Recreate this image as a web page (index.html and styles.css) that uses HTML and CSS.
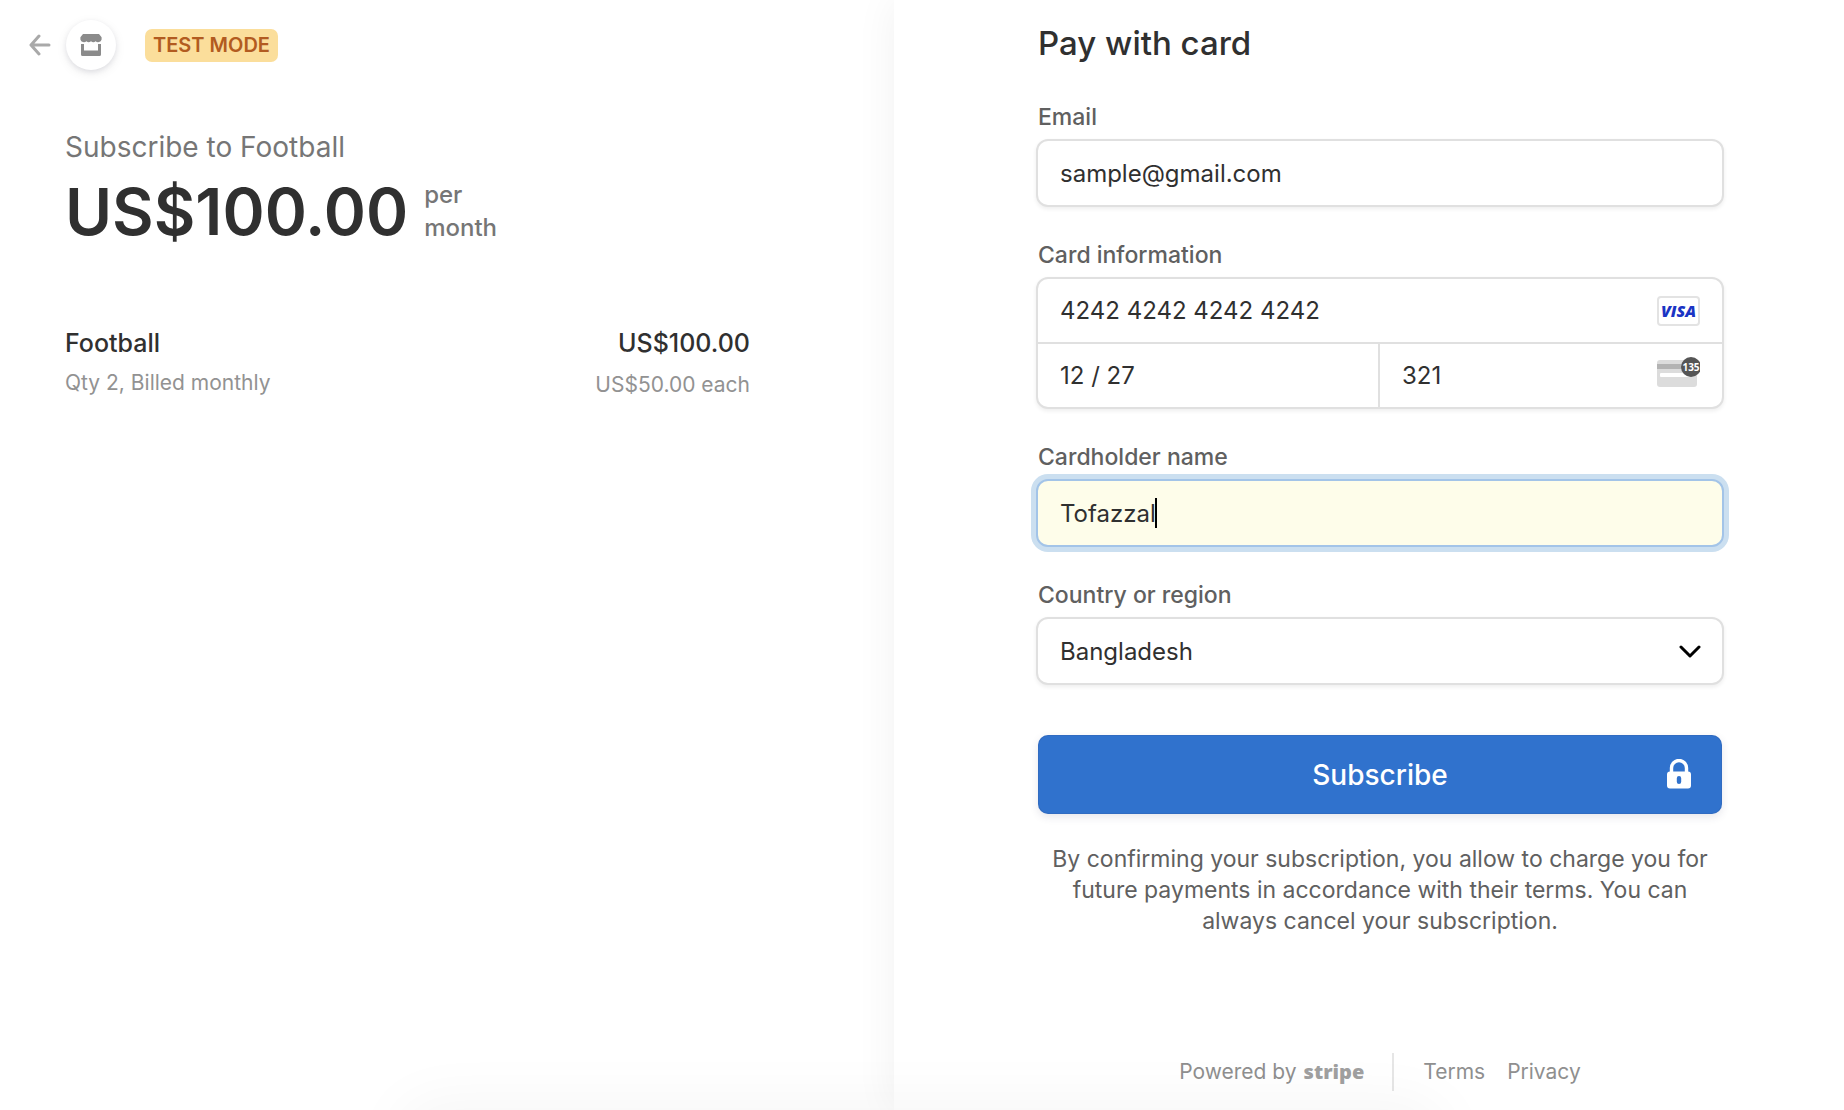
FILE: index.html
```html
<!DOCTYPE html>
<html lang="en">
<head>
<meta charset="utf-8">
<meta name="viewport" content="width=device-width, initial-scale=1">
<title>Checkout</title>
<link rel="stylesheet" href="styles.css">
</head>
<body>
<div class="checkout">
  <section class="summary">
    <header class="header">
      <a class="back" href="#" aria-label="Back">
        <svg width="22" height="22" viewBox="0 0 22 22" fill="none" stroke="#a9a9a9" stroke-width="3" stroke-linecap="round" stroke-linejoin="round"><path d="M20 11H2.5M10 2L2 11l8 9"/></svg>
      </a>
      <span class="shop">
        <svg width="22" height="24" viewBox="0 0 22 24" fill="#8b8b8b"><path d="M3 1h16l2.600 3.200v2.300a3.600 3.600 0 0 1-6 1.700 3.600 3.600 0 0 1-4.600 0 3.600 3.600 0 0 1-4.600 0 3.600 3.600 0 0 1-6-1.700V4.200z"/><path d="M1 11h3v6.500h14V11h3v10.500a1.500 1.500 0 0 1-1.500 1.500h-17A1.500 1.500 0 0 1 1 21.500z"/></svg>
      </span>
      <span class="badge">TEST MODE</span>
    </header>
    <div class="order">
      <h1 class="product">Subscribe to Football</h1>
      <div class="price">
        <span class="amount">US$100.00</span>
        <span class="interval">per month</span>
      </div>
      <div class="item">
        <div class="item-info">
          <span class="item-name">Football</span>
          <span class="item-note">Qty 2, Billed monthly</span>
        </div>
        <div class="item-info item-cost">
          <span class="item-name">US$100.00</span>
          <span class="item-note">US$50.00 each</span>
        </div>
      </div>
    </div>
  </section>

  <main class="payment">
    <form class="form">
      <h2 class="title">Pay with card</h2>

      <div class="field">
        <label class="label" for="email">Email</label>
        <input class="input box" id="email" type="email" value="sample@gmail.com">
      </div>

      <div class="field">
        <label class="label" for="number">Card information</label>
        <div class="card box">
          <div class="cell cell-number">
            <input class="input" id="number" type="text" value="4242 4242 4242 4242">
            <span class="visa">VISA</span>
          </div>
          <div class="cell cell-expiry">
            <input class="input" type="text" value="12 / 27" aria-label="Expiry date">
          </div>
          <div class="cell">
            <input class="input" type="text" value="321" aria-label="CVC">
            <svg class="cvc" width="43" height="30" viewBox="0 0 43 30">
              <rect x="0" y="3" width="40" height="27" rx="3" fill="#dcdcdc"/>
              <rect x="0" y="7" width="40" height="5" fill="#b3b3b3"/>
              <rect x="3" y="16" width="29" height="4" rx="1" fill="#fff"/>
              <circle cx="34" cy="10" r="10" fill="#555"/>
              <text class="cvc-digits" x="34" y="14" text-anchor="middle">135</text>
            </svg>
          </div>
        </div>
      </div>

      <div class="field">
        <label class="label" for="name">Cardholder name</label>
        <div class="control">
          <input class="input box active" id="name" type="text" value="Tofazzal">
          <span class="caret"></span>
        </div>
      </div>

      <div class="field">
        <label class="label" for="country">Country or region</label>
        <div class="control">
          <select class="input box" id="country"><option>Bangladesh</option></select>
          <svg class="chevron" width="22" height="14" viewBox="0 0 22 14" fill="none" stroke="#000" stroke-width="3" stroke-linecap="round" stroke-linejoin="round"><path d="M2 2l9 9 9-9"/></svg>
        </div>
      </div>

      <button class="submit" type="button">Subscribe
        <svg class="lock" width="24" height="30" viewBox="0 0 24 30"><path d="M4.500 14V9a7.500 7.500 0 0 1 15 0v5" fill="none" stroke="#fff" stroke-width="3.400"/><path fill="#fff" fill-rule="evenodd" d="M3 12.500h18a3 3 0 0 1 3 3V26.500a3 3 0 0 1-3 3H3a3 3 0 0 1-3-3V15.500a3 3 0 0 1 3-3zM12 17a2.200 2.200 0 0 0-2.200 2.200v3.600a2.200 2.200 0 0 0 4.400 0v-3.600A2.200 2.200 0 0 0 12 17z"/></svg>
      </button>

      <p class="terms">By confirming your subscription, you allow to charge you for future payments in accordance with their terms. You can always cancel your subscription.</p>
    </form>

    <footer class="footer">
      <a class="powered" href="#">Powered by <span class="stripe">stripe</span></a>
      <nav class="links"><a href="#">Terms</a><a href="#">Privacy</a></nav>
    </footer>
  </main>
</div>
</body>
</html>
```
FILE: styles.css
```css
* {
  box-sizing: border-box;
}

body {
  margin: 0;
  background: #fff;
  color: #303030;
  font-family: Inter, "Liberation Sans", sans-serif;
}

/* faint shade rising from the bottom edge of the window */
body::after {
  content: "";
  position: fixed;
  left: 22%;
  right: 22%;
  bottom: -60px;
  height: 60px;
  border-radius: 60px;
  box-shadow: 0 0 60px 10px rgba(0, 0, 0, 0.04);
  pointer-events: none;
}

a {
  color: inherit;
  text-decoration: none;
}

.checkout {
  display: grid;
  grid-template-columns: 894fr 950fr;
  min-height: 100vh;
  overflow: hidden;
}

.header {
  display: flex;
  align-items: center;
  padding: 20px 29px 0;
}

.back,
.shop {
  display: flex;
  align-items: center;
  justify-content: center;
}

.shop {
  width: 50px;
  height: 50px;
  margin: 0 29px 0 15px;
  border-radius: 50%;
  background: #fff;
  box-shadow: 0 2px 5px rgba(50, 50, 93, 0.1), 0 3px 12px rgba(0, 0, 0, 0.07);
}

.badge {
  padding: 0 8px;
  border-radius: 7px;
  background: #fbde9b;
  color: #b25b20;
  font-size: 20px;
  font-weight: 600;
  line-height: 33px;
}

.order {
  max-width: 750px;
  padding: 60px 0 0 65px;
}

.product {
  margin: 0;
  color: #767676;
  font-size: 28px;
  font-weight: 400;
  line-height: 34px;
}

.price {
  display: flex;
  align-items: center;
  gap: 16px;
  margin-top: 13px;
}

.amount {
  font-size: 64px;
  font-weight: 600;
  line-height: 70px;
}

.interval {
  width: 80px;
  padding-bottom: 2px;
  color: #767676;
  font-size: 24px;
  font-weight: 500;
  line-height: 33px;
}

.item {
  display: flex;
  justify-content: space-between;
  margin-top: 80px;
}

.item-info {
  display: flex;
  flex-direction: column;
  gap: 10px;
}

.item-cost {
  gap: 12px;
  text-align: right;
}

.item-name {
  font-size: 25px;
  font-weight: 500;
  line-height: 32px;
}

.item-note {
  color: #929292;
  font-size: 21px;
  line-height: 28px;
}

.payment {
  display: flex;
  flex-direction: column;
  justify-content: space-between;
  padding: 23px 120px 19px 142px;
  background: #fff;
  box-shadow: 0 0 40px rgba(0, 0, 0, 0.06);
}

.form {
  display: flex;
  flex-direction: column;
  gap: 34px;
}

.title {
  margin: 0 2px 6px;
  font-size: 33px;
  font-weight: 500;
  line-height: 40px;
}

.field {
  display: flex;
  flex-direction: column;
  gap: 8px;
}

.label {
  padding-left: 2px;
  color: #606060;
  font-size: 23px;
  font-weight: 500;
  line-height: 28px;
}

.input {
  display: block;
  width: 100%;
  height: 63px;
  margin: 0;
  padding: 0 22px;
  border: 0;
  outline: 0;
  background: transparent;
  color: #303030;
  font: 400 24px Inter, "Liberation Sans", sans-serif;
  appearance: none;
}

.box {
  border: 2px solid #e0e0e0;
  border-radius: 12px;
  background: #fff;
  box-shadow: 0 2px 4px rgba(0, 0, 0, 0.07);
}

.input.box {
  height: 68px;
}

.active.box {
  border-color: #a3c4e8;
  background: #fefdea;
  box-shadow: 0 0 0 5px #cbdff0;
}

.card {
  display: grid;
  grid-template-columns: 1fr 1fr;
}

.cell {
  display: flex;
  align-items: center;
  padding-right: 22px;
}

.cell-number {
  grid-column: 1 / -1;
  border-bottom: 2px solid #e0e0e0;
}

.cell-expiry {
  border-right: 2px solid #e0e0e0;
}

.visa {
  width: 43px;
  flex: none;
  border: 2px solid #e3e3e3;
  border-radius: 4px;
  color: #1a34c4;
  font: italic 800 16px/26px "Open Sans", sans-serif;
  text-align: center;
}

.cvc {
  flex: none;
  margin-bottom: 8px;
}

.cvc-digits {
  fill: #fff;
  font: 700 10px "Open Sans", sans-serif;
}

.control {
  position: relative;
}

.caret {
  position: absolute;
  top: 19px;
  left: 119px;
  width: 2px;
  height: 30px;
  background: #000;
}

.chevron {
  position: absolute;
  top: 28px;
  right: 23px;
  pointer-events: none;
}

.submit {
  position: relative;
  height: 79px;
  margin: 16px 2px 0;
  border: 0;
  border-radius: 10px;
  background: #3072cd;
  box-shadow: inset 0 0 0 1px rgba(50, 50, 93, 0.1), 0 3px 8px rgba(50, 50, 93, 0.12);
  color: #fff;
  font: 500 28px Inter, "Liberation Sans", sans-serif;
}

.lock {
  position: absolute;
  top: 24px;
  right: 31px;
}

.terms {
  margin: -4px 12px 0;
  color: #606060;
  font-size: 23px;
  line-height: 31px;
  text-align: center;
}

.footer {
  display: flex;
  align-items: center;
  justify-content: center;
  color: #8f8f8f;
  font-size: 21px;
  line-height: 38px;
}

.powered {
  display: flex;
  gap: 7px;
  padding-right: 28px;
  border-right: 2px solid #e6e6e6;
}

.stripe {
  color: #a0a0a0;
  font: 800 20px/38px "Open Sans", sans-serif;
}

.links {
  display: flex;
  gap: 22px;
  padding-left: 29px;
}
```
